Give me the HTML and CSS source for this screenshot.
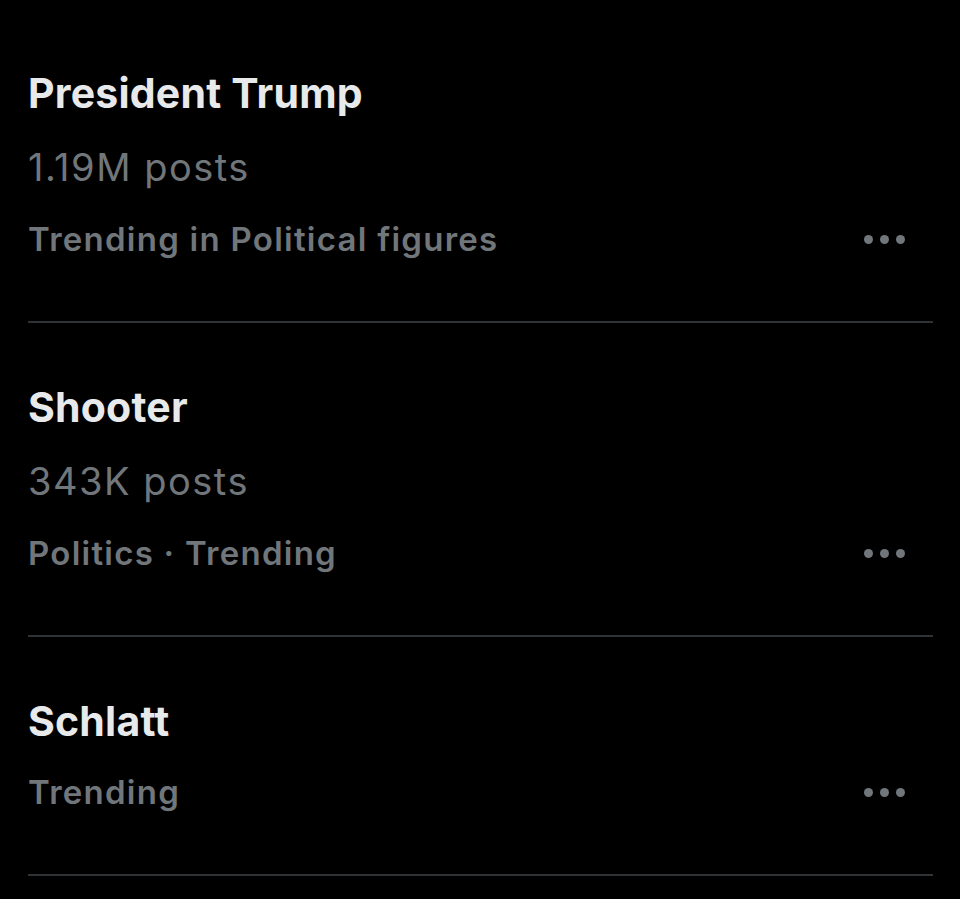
FILE: index.html
```html
<!DOCTYPE html>
<html>
<head>
<meta charset="utf-8">
<link rel="stylesheet" href="styles.css">
</head>
<body>
<div class="list">
  <div class="item first">
    <div class="title">President Trump</div>
    <div class="count">1.19M posts</div>
    <div class="meta-row">
      <div class="meta">Trending in Political figures</div>
      <div class="more"><span></span><span></span><span></span></div>
    </div>
  </div>
  <div class="item">
    <div class="title">Shooter</div>
    <div class="count">343K posts</div>
    <div class="meta-row">
      <div class="meta">Politics · Trending</div>
      <div class="more"><span></span><span></span><span></span></div>
    </div>
  </div>
  <div class="item">
    <div class="title">Schlatt</div>
    <div class="meta-row">
      <div class="meta">Trending</div>
      <div class="more"><span></span><span></span><span></span></div>
    </div>
  </div>
</div>
</body>
</html>
```
FILE: styles.css
```css
html, body {
  margin: 0;
  padding: 0;
  background: #000;
}
.list {
  padding: 0 27px 0 28px;
}
.item {
  border-bottom: 2px solid #2f3336;
  padding: 59px 0 60px;
  display: flex;
  flex-direction: column;
}
.item.first {
  padding-top: 68px;
}
.title {
  font-family: Inter, "Noto Sans", sans-serif;
  font-weight: 700;
  font-size: 41px;
  line-height: 50px;
  letter-spacing: 0.2px;
  color: #e7e9ea;
  margin-bottom: 24px;
}
.count {
  font-family: Inter, "Noto Sans", sans-serif;
  font-weight: 400;
  font-size: 38px;
  line-height: 50px;
  letter-spacing: 1.5px;
  color: #71767b;
  margin-bottom: 25px;
}
.meta-row {
  display: flex;
  align-items: center;
  justify-content: space-between;
}
.meta {
  font-family: Inter, "Noto Sans", sans-serif;
  font-weight: 600;
  font-size: 33px;
  line-height: 44px;
  letter-spacing: 1.25px;
  color: #71767b;
}
.more {
  display: flex;
  gap: 7px;
  margin-right: 28px;
}
.more span {
  width: 9px;
  height: 9px;
  border-radius: 50%;
  background: #71767b;
}
```
